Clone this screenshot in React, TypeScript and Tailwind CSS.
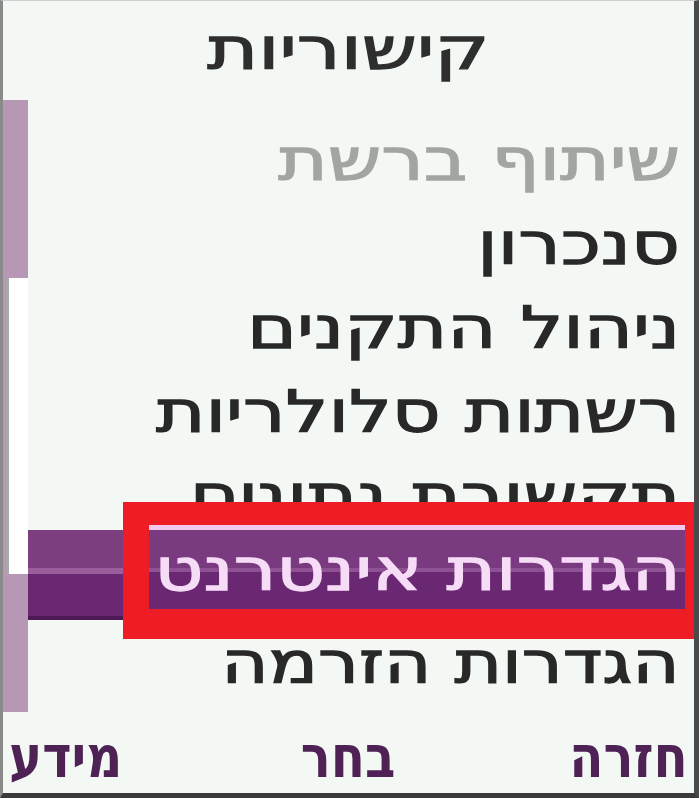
import React from "react";

const items = [
  { label: "שיתוף ברשת", dim: true },
  { label: "סנכרון" },
  { label: "ניהול התקנים" },
  { label: "רשתות סלולריות" },
  { label: "תקשורת נתונים" },
];

const wide =
  "inline-block origin-right scale-x-[1.3] [-webkit-text-stroke:1.3px_currentColor]";

export default function App() {
  return (
    <div
      dir="rtl"
      className="relative flex h-[798px] w-[699px] flex-col overflow-hidden border-b-[5px] border-l-[3px] border-r-[5px] border-t border-b-[#3a3a3a] border-l-[#8a8a8a] border-r-[#4a4a4a] border-t-[#d0d0d0] bg-[#f4f8f5]"
      style={{ fontFamily: '"DejaVu Sans", "Liberation Sans", sans-serif' }}
    >
      {/* title */}
      <div className="flex h-[99px] shrink-0 items-center justify-center pb-[4px] text-[58px] leading-none text-[#2e2e2e]">
        <span className="inline-block scale-x-[1.34] [-webkit-text-stroke:1.3px_currentColor]">
          קישוריות
        </span>
      </div>

      {/* list + scrollbar */}
      <div className="flex h-[612px] shrink-0 flex-row">
        <div className="flex flex-1 flex-col pt-[18px]">
          {items.map((it) => (
            <div
              key={it.label}
              className={`flex h-[84px] shrink-0 items-center pr-[14px] text-[58px] leading-none ${
                it.dim ? "text-[#a2a6a3]" : "text-[#282828]"
              }`}
            >
              <span className={wide}>{it.label}</span>
            </div>
          ))}
          <div className="mt-[-8px] flex h-[90px] shrink-0 flex-col">
            <div className="h-[38px] bg-[#7c3e7e]" />
            <div className="h-[6px] bg-[#9a5e9c]" />
            <div className="h-[42px] bg-[#6a2872]" />
            <div className="h-[4px] bg-[#4e1a56]" />
          </div>
          <div className="flex h-[86px] shrink-0 items-center pr-[14px] text-[58px] leading-none text-[#282828]">
            <span className="inline-block origin-right scale-x-[1.25] [-webkit-text-stroke:1.3px_currentColor]">
              הגדרות הזרמה
            </span>
          </div>
        </div>

        {/* scrollbar */}
        <div className="flex w-[25px] shrink-0 flex-col bg-[#b698b6]">
          <div className="h-[178px]" />
          <div className="ml-[3px] h-[296px] border-l-[3px] border-[#a8a8a8] bg-white" />
        </div>
      </div>

      {/* softkeys */}
      <div className="grid flex-1 grid-cols-3 items-center px-[6px] pt-[8px] text-[58px] font-bold leading-none text-[#4e2254]">
        <span className="text-right">
          <span className="inline-block origin-right scale-x-[0.86]">חזרה</span>
        </span>
        <span className="text-center">
          <span className="inline-block scale-x-[0.86]">בחר</span>
        </span>
        <span className="text-left">
          <span className="inline-block origin-left scale-x-[0.86]">מידע</span>
        </span>
      </div>

      {/* highlighted selection marker */}
      <div className="absolute left-[120px] top-[501px] flex h-[137px] w-[572px] border-b-[30px] border-l-[26px] border-r-[10px] border-t-[23px] border-[#ee1c24]">
        <div className="flex flex-1 flex-col">
          <div className="h-[5px] bg-[#f2c8ef]" />
          <div className="relative flex flex-1 flex-col">
            <div className="h-[38px] bg-[#7a3a80]" />
            <div className="h-[4px] bg-[#8e5294]" />
            <div className="flex-1 bg-[#6a2872]" />
            <div className="absolute inset-0 flex items-center pr-[4px] text-[58px] leading-none text-[#f6dcf6]">
              <span className={wide}>הגדרות אינטרנט</span>
            </div>
          </div>
        </div>
      </div>
    </div>
  );
}
